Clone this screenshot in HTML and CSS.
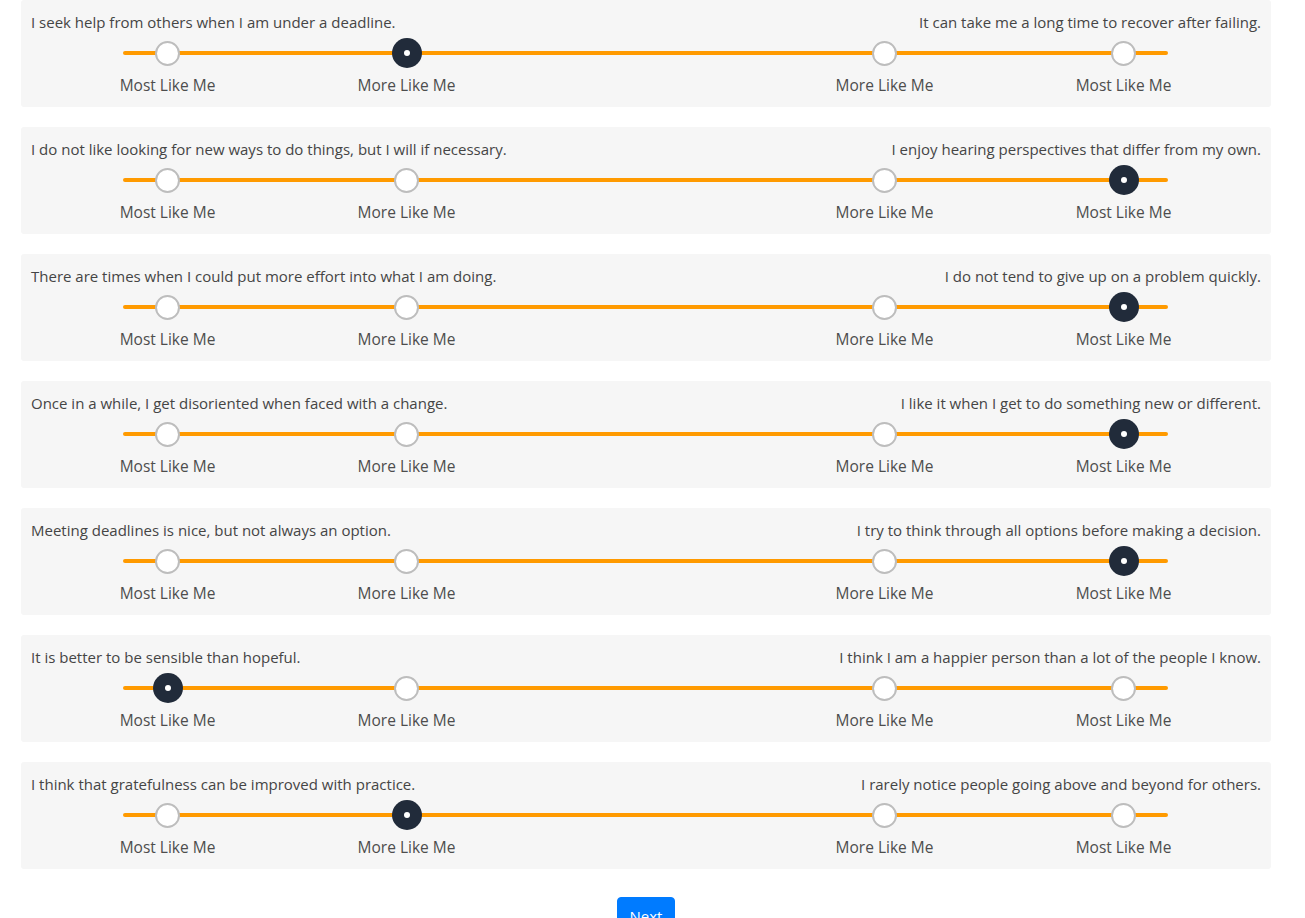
FILE: index.html
```html
<!DOCTYPE html>
<html lang="en">
<head>
<meta charset="utf-8">
<title>Survey</title>
<link rel="stylesheet" href="styles.css">
</head>
<body>
<div class="page">
  <div class="card">
    <div class="statements"><span>I seek help from others when I am under a deadline.</span><span>It can take me a long time to recover after failing.</span></div>
    <div class="options">
      <div class="track"></div>
      <div class="opt"><span class="dot"></span><span class="lbl">Most Like Me</span></div>
      <div class="opt"><span class="dot sel"></span><span class="lbl">More Like Me</span></div>
      <div class="gap"></div>
      <div class="opt"><span class="dot"></span><span class="lbl">More Like Me</span></div>
      <div class="opt"><span class="dot"></span><span class="lbl">Most Like Me</span></div>
    </div>
  </div>
  <div class="card">
    <div class="statements"><span>I do not like looking for new ways to do things, but I will if necessary.</span><span>I enjoy hearing perspectives that differ from my own.</span></div>
    <div class="options">
      <div class="track"></div>
      <div class="opt"><span class="dot"></span><span class="lbl">Most Like Me</span></div>
      <div class="opt"><span class="dot"></span><span class="lbl">More Like Me</span></div>
      <div class="gap"></div>
      <div class="opt"><span class="dot"></span><span class="lbl">More Like Me</span></div>
      <div class="opt"><span class="dot sel"></span><span class="lbl">Most Like Me</span></div>
    </div>
  </div>
  <div class="card">
    <div class="statements"><span>There are times when I could put more effort into what I am doing.</span><span>I do not tend to give up on a problem quickly.</span></div>
    <div class="options">
      <div class="track"></div>
      <div class="opt"><span class="dot"></span><span class="lbl">Most Like Me</span></div>
      <div class="opt"><span class="dot"></span><span class="lbl">More Like Me</span></div>
      <div class="gap"></div>
      <div class="opt"><span class="dot"></span><span class="lbl">More Like Me</span></div>
      <div class="opt"><span class="dot sel"></span><span class="lbl">Most Like Me</span></div>
    </div>
  </div>
  <div class="card">
    <div class="statements"><span>Once in a while, I get disoriented when faced with a change.</span><span>I like it when I get to do something new or different.</span></div>
    <div class="options">
      <div class="track"></div>
      <div class="opt"><span class="dot"></span><span class="lbl">Most Like Me</span></div>
      <div class="opt"><span class="dot"></span><span class="lbl">More Like Me</span></div>
      <div class="gap"></div>
      <div class="opt"><span class="dot"></span><span class="lbl">More Like Me</span></div>
      <div class="opt"><span class="dot sel"></span><span class="lbl">Most Like Me</span></div>
    </div>
  </div>
  <div class="card">
    <div class="statements"><span>Meeting deadlines is nice, but not always an option.</span><span>I try to think through all options before making a decision.</span></div>
    <div class="options">
      <div class="track"></div>
      <div class="opt"><span class="dot"></span><span class="lbl">Most Like Me</span></div>
      <div class="opt"><span class="dot"></span><span class="lbl">More Like Me</span></div>
      <div class="gap"></div>
      <div class="opt"><span class="dot"></span><span class="lbl">More Like Me</span></div>
      <div class="opt"><span class="dot sel"></span><span class="lbl">Most Like Me</span></div>
    </div>
  </div>
  <div class="card">
    <div class="statements"><span>It is better to be sensible than hopeful.</span><span>I think I am a happier person than a lot of the people I know.</span></div>
    <div class="options">
      <div class="track"></div>
      <div class="opt"><span class="dot sel"></span><span class="lbl">Most Like Me</span></div>
      <div class="opt"><span class="dot"></span><span class="lbl">More Like Me</span></div>
      <div class="gap"></div>
      <div class="opt"><span class="dot"></span><span class="lbl">More Like Me</span></div>
      <div class="opt"><span class="dot"></span><span class="lbl">Most Like Me</span></div>
    </div>
  </div>
  <div class="card">
    <div class="statements"><span>I think that gratefulness can be improved with practice.</span><span>I rarely notice people going above and beyond for others.</span></div>
    <div class="options">
      <div class="track"></div>
      <div class="opt"><span class="dot"></span><span class="lbl">Most Like Me</span></div>
      <div class="opt"><span class="dot sel"></span><span class="lbl">More Like Me</span></div>
      <div class="gap"></div>
      <div class="opt"><span class="dot"></span><span class="lbl">More Like Me</span></div>
      <div class="opt"><span class="dot"></span><span class="lbl">Most Like Me</span></div>
    </div>
  </div>
  <div class="actions"><button class="btn-next" type="button">Next</button></div>
</div>
</body>
</html>
```
FILE: styles.css
```css
html, body {
  margin: 0;
  padding: 0;
  background: #fff;
}
body {
  font-family: "Open Sans", "Noto Sans", sans-serif;
  font-size: 15px;
  color: #454545;
}
.page {
  width: 1250px;
  margin-left: 21px;
  display: flex;
  flex-direction: column;
  gap: 20px;
}
.card {
  background: #f6f6f6;
  border-radius: 3px;
  height: 107px;
  box-sizing: border-box;
  padding: 10px;
  display: flex;
  flex-direction: column;
}
.statements {
  display: flex;
  justify-content: space-between;
  line-height: 24px;
  height: 24px;
}
.options {
  position: relative;
  width: 1195px;
  margin: 4px auto 0;
  display: grid;
  grid-template-columns: repeat(5, 239px);
}
.track {
  position: absolute;
  left: 74.5px;
  right: 75.5px;
  top: 13px;
  height: 4px;
  border-radius: 2px;
  background: #ff9a00;
}
.opt {
  position: relative;
  display: flex;
  flex-direction: column;
  align-items: center;
  margin-left: -1px;
}
.dot {
  width: 30px;
  height: 30px;
  display: flex;
  align-items: center;
  justify-content: center;
}
.dot::before {
  content: "";
  width: 21px;
  height: 21px;
  border: 2px solid #bdbdbd;
  border-radius: 50%;
  background: #fff;
}
.dot.sel {
  background: #212b3a;
  border-radius: 50%;
}
.dot.sel::before {
  width: 6px;
  height: 6px;
  border: none;
  background: #fff;
}
.lbl {
  margin-top: 5px;
  line-height: 24px;
  font-size: 15.5px;
  color: #4d4d4d;
}
.actions {
  display: flex;
  justify-content: center;
  margin-top: 8px;
}
.btn-next {
  font-family: "Open Sans", "Noto Sans", sans-serif;
  font-size: 15px;
  line-height: 24px;
  padding: 6px 12px;
  color: #fff;
  background: #007bff;
  border: 1px solid #007bff;
  border-radius: 4px;
}
```
